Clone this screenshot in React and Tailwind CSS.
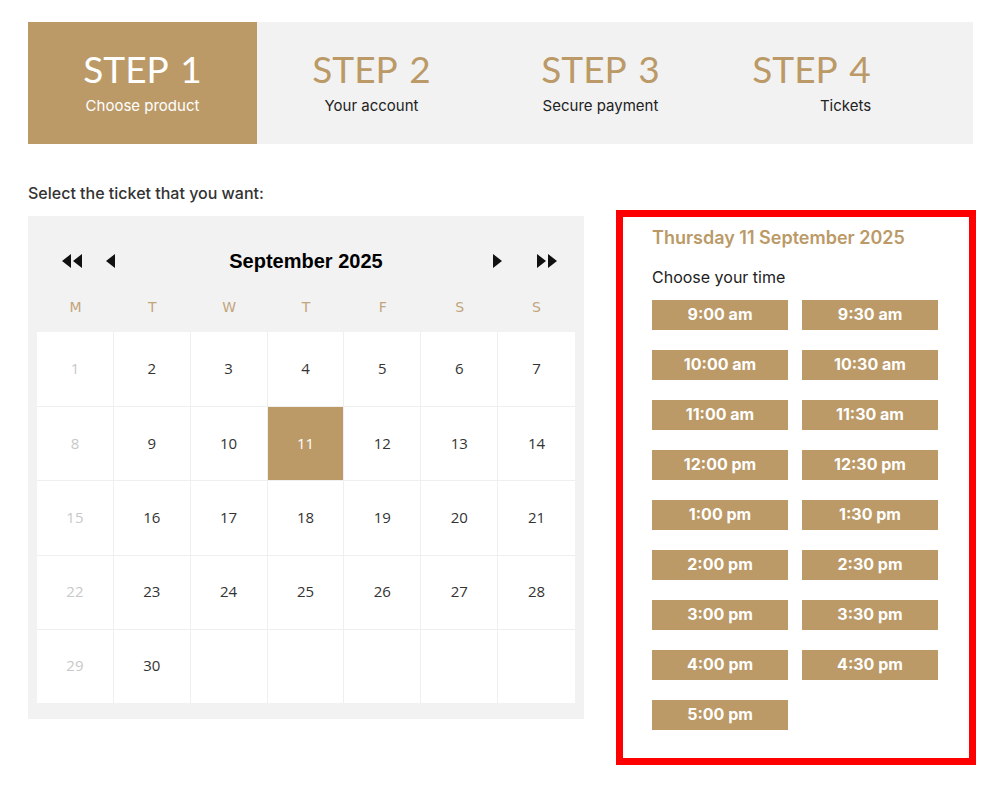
const GOLD = 'bg-[#bb9a68]';

const steps = [
  { title: 'STEP 1', label: 'Choose product', active: true, shift: '' },
  { title: 'STEP 2', label: 'Your account', shift: '' },
  { title: 'STEP 3', label: 'Secure payment', shift: '' },
  { title: 'STEP 4', label: 'Tickets', shift: 'pr-[36px]', labelShift: 'pl-[32px]' },
];

const days = [
  [1, 2, 3, 4, 5, 6, 7],
  [8, 9, 10, 11, 12, 13, 14],
  [15, 16, 17, 18, 19, 20, 21],
  [22, 23, 24, 25, 26, 27, 28],
  [29, 30, null, null, null, null, null],
];

const times = [
  '9:00 am', '9:30 am', '10:00 am', '10:30 am', '11:00 am', '11:30 am',
  '12:00 pm', '12:30 pm', '1:00 pm', '1:30 pm', '2:00 pm', '2:30 pm',
  '3:00 pm', '3:30 pm', '4:00 pm', '4:30 pm', '5:00 pm',
];

function Tri({ dir, double }) {
  const w = double ? 22 : 11;
  const one = (x) =>
    dir === 'left'
      ? `M${x + 10} 0 L${x + 10} 14 L${x + 1} 7 Z`
      : `M${x + 1} 0 L${x + 1} 14 L${x + 10} 7 Z`;
  return (
    <svg width={w} height="14" viewBox={`0 0 ${w} 14`}>
      <path d={one(0)} fill="#111" />
      {double && <path d={one(11)} fill="#111" />}
    </svg>
  );
}

function StepBar() {
  return (
    <div className="flex w-[945px] h-[122px] bg-[#f2f2f2]">
      {steps.map((s) => (
        <div
          key={s.title}
          className={`w-[229px] flex flex-col items-center pt-[27px] ${s.active ? GOLD : ''}`}
        >
          <div
            className={`text-[37px] leading-[40px] [word-spacing:3px] font-['Lato',sans-serif] ${s.shift} ${s.active ? 'text-white' : 'text-[#bb9a68]'}`}
          >
            {s.title}
          </div>
          <div className={`mt-[7px] text-[15px] leading-[20px] ${s.labelShift || ''} ${s.active ? 'text-white' : 'text-[#222]'}`}>
            {s.label}
          </div>
        </div>
      ))}
    </div>
  );
}

function Calendar() {
  return (
    <div className="mt-[6px] w-[556px] bg-[#f2f2f2] px-[9px] pt-[16px] pb-[16px]">
      <div className="flex items-center h-[58px] pl-[24px] pr-[17px]">
        <Tri dir="left" double />
        <div className="ml-[22px]"><Tri dir="left" /></div>
        <div className="flex-1 text-center text-[20px] font-bold text-black font-['Liberation_Sans',Arial,sans-serif] pl-[4px]">
          September 2025
        </div>
        <Tri dir="right" />
        <div className="ml-[33px]"><Tri dir="right" double /></div>
      </div>
      <div className="grid grid-cols-7 h-[34px] mb-[8px] items-center text-center text-[14px] text-[#c2a57c] font-['DejaVu_Sans',sans-serif]">
        {['M', 'T', 'W', 'T', 'F', 'S', 'S'].map((d, i) => (
          <div key={i}>{d}</div>
        ))}
      </div>
      <div className="grid grid-cols-7 grid-rows-5 h-[371px] bg-white">
        {days.flat().map((d, i) => {
          const col = i % 7;
          const sel = d === 11;
          return (
            <div
              key={i}
              className={`flex items-center justify-center pb-[2px] text-[15px] font-['Open_Sans',sans-serif] border-[#efefef] ${col < 6 ? 'border-r' : ''} ${i >= 7 ? 'border-t' : ''} ${sel ? `${GOLD} text-white` : col === 0 ? 'text-[#c8c8c8]' : 'text-[#333]'}`}
            >
              {d}
            </div>
          );
        })}
      </div>
    </div>
  );
}

function TimePanel() {
  return (
    <div className="w-[360px] h-[555px] border-[7px] border-[#ff0000] pl-[29px] pt-[9px]">
      <div className="text-[18px] leading-[24px] font-semibold text-[#bb9a68]">Thursday 11 September 2025</div>
      <div className="mt-[15px] text-[16px] leading-[24px] text-[#222]">Choose your time</div>
      <div className="mt-[11px] grid grid-cols-[136px_136px] gap-x-[14px] gap-y-[20px]">
        {times.map((t) => (
          <div key={t} className={`h-[30px] flex items-center justify-center pb-[3px] text-white text-[16px] font-bold ${GOLD}`}>
            {t}
          </div>
        ))}
      </div>
    </div>
  );
}

export default function App() {
  return (
    <div className="min-h-screen bg-white pl-[28px] pt-[22px] font-['Inter',sans-serif]">
      <StepBar />
      <div className="mt-[37px] text-[16px] leading-[24px] font-medium text-[#333]">Select the ticket that you want:</div>
      <div className="mt-[5px] flex items-start gap-[32px]">
        <Calendar />
        <TimePanel />
      </div>
    </div>
  );
}
